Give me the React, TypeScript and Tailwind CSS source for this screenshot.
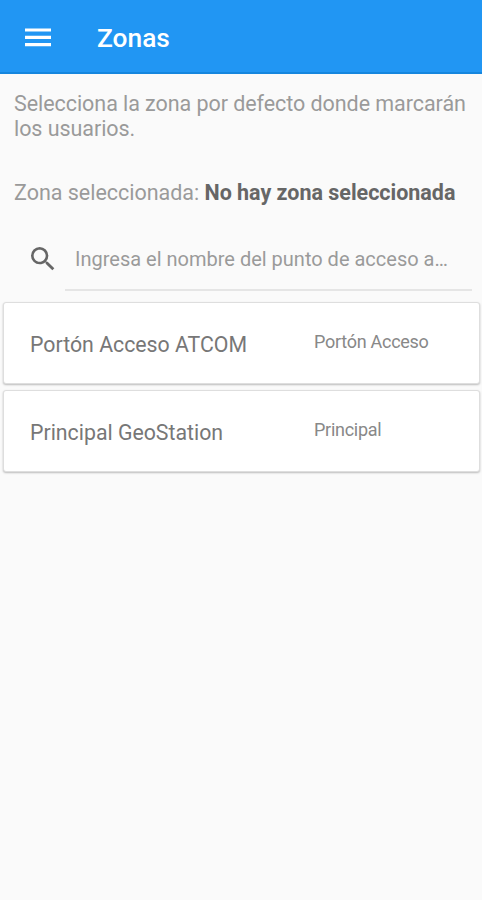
import { MdSearch } from "react-icons/md";

const zones = [
  { id: 1, name: "Portón Acceso ATCOM", description: "Portón Acceso" },
  { id: 2, name: "Principal GeoStation", description: "Principal" },
];

function MenuIcon() {
  return (
    <svg width="26" height="19" viewBox="0 0 26 19" stroke="currentColor" strokeWidth="3.2">
      <path d="M0 2h26M0 9.3h26M0 16.6h26" />
    </svg>
  );
}

function ZoneCard({ name, description }: { name: string; description: string }) {
  return (
    <div className="flex h-[82px] rounded-[3px] border border-[#dedede] bg-white pl-[26px] shadow-[0_1px_2px_rgba(0,0,0,0.25)]">
      <p className="w-[284px] pt-[27px] text-[21.3px] leading-[30px] text-[#777]">{name}</p>
      <p className="pt-[26px] text-[18px] leading-[26px] tracking-[-0.27px] text-[#888]">{description}</p>
    </div>
  );
}

export default function App() {
  return (
    <div className="h-screen overflow-hidden bg-[#fafafa] font-['Roboto',sans-serif]">
      <header className="flex h-[74px] items-center border-b-2 border-[#1586de] bg-[#2196f3] pl-[25px] pt-[2px] text-white">
        <button className="flex">
          <MenuIcon />
        </button>
        <h1 className="ml-[46px] pt-[2px] text-[26.3px] font-medium leading-[36px]">Zonas</h1>
      </header>

      <main>
        <div className="px-[14px] pt-[17px] text-[21.5px] text-[#9a9a9a]">
          <p className="whitespace-nowrap leading-[25px] tracking-[-0.06px]">
            Selecciona la zona por defecto donde marcarán
            <br />
            los usuarios.
          </p>
          <p className="mt-[37px] whitespace-nowrap leading-[30px] tracking-[-0.02px]">
            Zona seleccionada: <b className="text-[#666]">No hay zona seleccionada</b>
          </p>
        </div>

        <div className="mt-[31px] flex h-[52px] pl-[27px] pr-[10px] text-[#666]">
          <MdSearch size={32} className="mt-[4px] shrink-0" />
          <div className="ml-[6px] flex-1 border-b-2 border-[#e5e5e5] pl-[10px] text-[20px] leading-[40px] text-[#9a9a9a]">
            Ingresa el nombre del punto de acceso a…
          </div>
        </div>

        <div className="mt-[11px] flex flex-col gap-[6px] pl-[3px] pr-[2px]">
          {zones.map((zone) => (
            <ZoneCard key={zone.id} name={zone.name} description={zone.description} />
          ))}
        </div>
      </main>
    </div>
  );
}
